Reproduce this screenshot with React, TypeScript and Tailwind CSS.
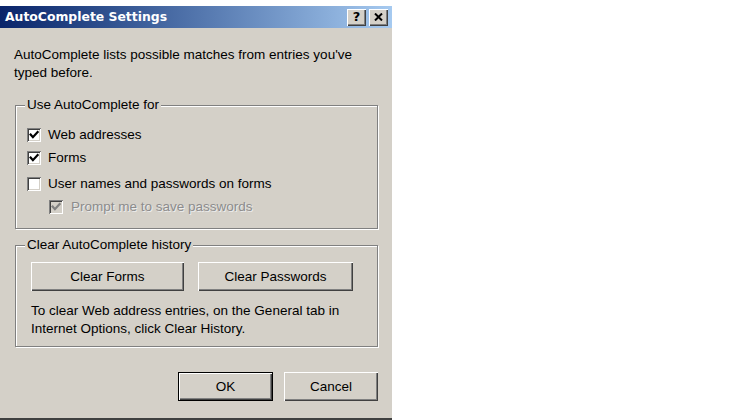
import React from "react";

const raised =
  "shadow-[inset_1px_1px_0_#ffffff,inset_-1px_-1px_0_#404040,inset_-2px_-2px_0_#808080]";

function Check({ checked, disabled }: { checked: boolean; disabled?: boolean }) {
  return (
    <div
      className={`w-[14px] h-[14px] shrink-0 shadow-[inset_1px_1px_0_#808080,inset_-1px_-1px_0_#ffffff,inset_2px_2px_0_#404040,inset_-2px_-2px_0_#d4d0c8] ${
        disabled ? "bg-[#d4d0c8]" : "bg-white"
      }`}
    >
      {checked && (
        <svg width="14" height="14" viewBox="0 0 14 14" className="block">
          <polyline
            points="3.6,6.6 5.9,9.2 10.6,4"
            fill="none"
            stroke={disabled ? "#808080" : "#000000"}
            strokeWidth="2.2"
            strokeLinecap="square"
          />
        </svg>
      )}
    </div>
  );
}

function Row({
  label,
  checked,
  disabled,
  className,
}: {
  label: string;
  checked: boolean;
  disabled?: boolean;
  className?: string;
}) {
  return (
    <div className={`flex items-center h-[23px] ${className ?? ""}`}>
      <Check checked={checked} disabled={disabled} />
      <span
        className={
          disabled
            ? "ml-[8px] text-[#8c8c8c] [text-shadow:1px_1px_0_#ececec]"
            : "ml-[7px]"
        }
      >
        {label}
      </span>
    </div>
  );
}

function Btn({
  label,
  className,
  isDefault,
}: {
  label: string;
  className: string;
  isDefault?: boolean;
}) {
  if (isDefault) {
    return (
      <div className={`border border-black bg-[#d4d0c8] ${className}`}>
        <div className={`w-full h-full flex items-center justify-center ${raised}`}>
          {label}
        </div>
      </div>
    );
  }
  return (
    <div className={`flex items-center justify-center bg-[#d4d0c8] ${raised} ${className}`}>
      {label}
    </div>
  );
}

function TitleBtn({ children }: { children: React.ReactNode }) {
  return (
    <div
      className={`w-[19px] h-[17px] bg-[#d4d0c8] flex items-center justify-center ${raised}`}
    >
      {children}
    </div>
  );
}

export default function App() {
  return (
    <div className="w-[750px] h-[420px] bg-white flex overflow-hidden">
      <div className="w-[392px] h-[420px] flex flex-col pt-[6px] [font-family:'Liberation_Sans',Arial,sans-serif] text-[13.5px] leading-[18px] text-black">
        <div className="h-[22px] flex items-center justify-between pl-[5px] pr-[4px] bg-gradient-to-r from-[#0a246a] to-[#a6caf0]">
          <span className="text-white font-bold text-[12.4px] [font-family:'DejaVu_Sans',Verdana,sans-serif]">
            AutoComplete Settings
          </span>
          <div className="flex gap-[3px]">
            <TitleBtn>
              <span className="font-bold text-[13px] leading-none [font-family:'DejaVu_Sans',sans-serif] -mt-[1px]">
                ?
              </span>
            </TitleBtn>
            <TitleBtn>
              <svg width="9" height="8" viewBox="0 0 9 8" className="block">
                <path d="M1 0.5 L8 7.5 M8 0.5 L1 7.5" stroke="#000" strokeWidth="2" />
              </svg>
            </TitleBtn>
          </div>
        </div>
        <div className="flex-1 bg-[#d4d0c8] flex flex-col pl-[15px] pr-[14px] border-b-2 border-[#404040]">
          <p className="mt-[18px] -ml-[1px]">
            AutoComplete lists possible matches from entries you've
            <br />
            typed before.
          </p>
          <fieldset className="mt-[15px] border border-[#808080] shadow-[inset_1px_1px_0_#ffffff,1px_1px_0_#ffffff] p-0 m-0">
            <legend className="ml-[9px] px-[2px] bg-[#d4d0c8] leading-[16px]">
              Use AutoComplete for
            </legend>
            <div className="pl-[11px] pt-[10px] pb-[10px]">
              <Row label="Web addresses" checked />
              <Row label="Forms" checked />
              <Row label="User names and passwords on forms" checked={false} className="mt-[3px]" />
              <Row label="Prompt me to save passwords" checked disabled className="ml-[22px]" />
            </div>
          </fieldset>
          <fieldset className="mt-[8px] border border-[#808080] shadow-[inset_1px_1px_0_#ffffff,1px_1px_0_#ffffff] p-0 m-0">
            <legend className="ml-[9px] px-[2px] bg-[#d4d0c8] leading-[16px]">
              Clear AutoComplete history
            </legend>
            <div className="pl-[15px] pt-[9px] pb-[8px]">
              <div className="flex gap-[14px]">
                <Btn label="Clear Forms" className="w-[153px] h-[29px]" />
                <Btn label="Clear Passwords" className="w-[155px] h-[29px]" />
              </div>
              <p className="mt-[11px]">
                To clear Web address entries, on the General tab in
                <br />
                Internet Options, click Clear History.
              </p>
            </div>
          </fieldset>
          <div className="mt-[25px] flex justify-end gap-[11px]">
            <Btn label="OK" className="w-[95px] h-[29px]" isDefault />
            <Btn label="Cancel" className="w-[94px] h-[29px]" />
          </div>
        </div>
      </div>
    </div>
  );
}
